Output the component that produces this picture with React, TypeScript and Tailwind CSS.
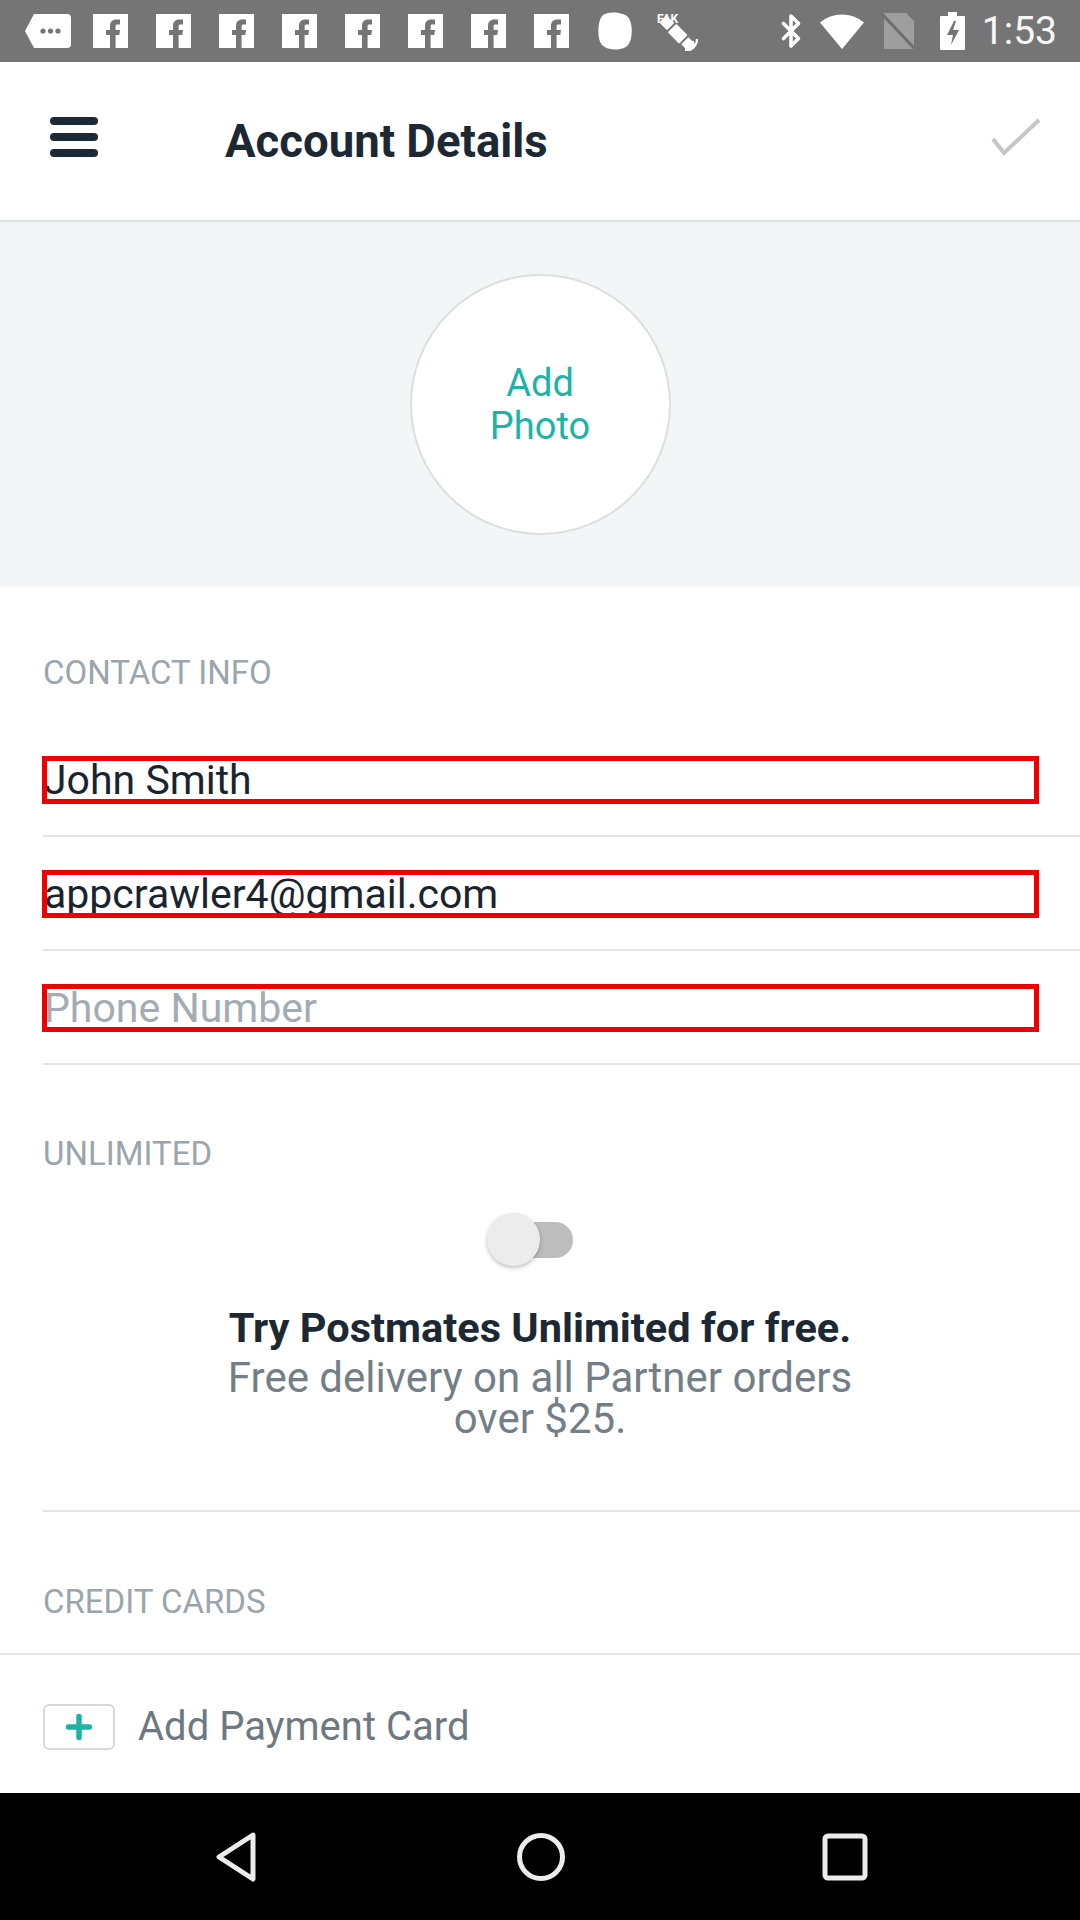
import React from 'react';
import { Bluetooth } from 'lucide-react';

function FbIcon() {
  return (
    <svg width="35" height="34" viewBox="0 0 35 34">
      <rect width="35" height="34" fill="#fff" />
      <path d="M17 34V21h-4v-5h4v-4c0-4.2 2.4-6.5 6.2-6.5H27v5h-2.6c-1.3 0-1.8.6-1.8 1.7V16H27l-.7 5h-3.7v13z" fill="#757575" />
    </svg>
  );
}

function StatusBar() {
  return (
    <div className="h-[62px] bg-[#757575] flex items-center pl-[25px] pr-[23px] shrink-0">
      {/* more notifications tag */}
      <svg width="46" height="34" viewBox="0 0 46 34">
        <path d="M9 0h33a4 4 0 0 1 4 4v26a4 4 0 0 1-4 4H9L0 17z" fill="#fff" />
        <circle cx="18" cy="17" r="2.6" fill="#757575" />
        <circle cx="25.5" cy="17" r="2.6" fill="#757575" />
        <circle cx="33" cy="17" r="2.6" fill="#757575" />
      </svg>
      <div className="flex gap-[28px] ml-[22px]">
        {Array.from({ length: 8 }).map((_, i) => (
          <FbIcon key={i} />
        ))}
      </div>
      {/* blob app icon */}
      <svg width="36" height="38" viewBox="0 0 36 38" className="ml-[28px]">
        <path d="M6 3c6-4 20-3 25 2 5 6 5 22 0 28-5 6-20 6-26 0C0 28 0 8 6 3z" fill="#fff" />
      </svg>
      {/* fake gps */}
      <svg width="46" height="40" viewBox="0 0 46 40" className="ml-[22px]">
        <text x="2" y="12" fontSize="12" fontWeight="700" fill="#fff" fontFamily="Roboto, sans-serif">FAK</text>
        <g transform="rotate(-45 22 22)">
          <rect x="16" y="15" width="12" height="16" rx="1" fill="#fff" />
          <rect x="17" y="2" width="10" height="11" fill="#fff" />
          <rect x="17" y="33" width="10" height="11" fill="#fff" />
        </g>
        <path d="M30 38a8 8 0 0 0 8-8M30 34a4 4 0 0 0 4-4M30 40a12 12 0 0 0 12-12" stroke="#fff" strokeWidth="2.2" fill="none" />
      </svg>
      <div className="flex-1" />
      <Bluetooth size={36} color="#fff" strokeWidth={2.4} className="mr-[8px]" />
      {/* wifi */}
      <svg width="46" height="36" viewBox="0 0 46 36" className="ml-[2px]">
        <path d="M1 9.5A34 34 0 0 1 45 9.5L23 36z" fill="#fff" />
      </svg>
      {/* no sim */}
      <svg width="34" height="36" viewBox="0 0 34 36" className="ml-[17px]">
        <path d="M2 0h22l8 8v28H2z" fill="#9e9e9e" />
        <path d="M1 2l31 33" stroke="#6e6e6e" strokeWidth="3" />
      </svg>
      {/* battery charging */}
      <svg width="25" height="38" viewBox="0 0 25 38" className="ml-[24px]">
        <rect x="8" y="0" width="9" height="4" fill="#fff" />
        <rect x="0" y="4" width="25" height="34" rx="1" fill="#fff" />
        <path d="M14 9l-7 14h6l-2 10 8-15h-6l3-9z" fill="#757575" />
      </svg>
      <span className="ml-[17px] text-[39px] leading-none text-[#f7f7f7] font-['Roboto']">1:53</span>
    </div>
  );
}

function Field({ value, placeholder }: { value?: string; placeholder?: string }) {
  return (
    <div className="pl-[42px]">
      <div className="h-[48px] mr-[41px] border-[5px] border-[#ee0000] flex items-center overflow-hidden">
        <span className={`text-[41px] leading-none -ml-[3px] ${value ? 'text-[#1a242e]' : 'text-[#a3acb2]'}`}>
          {value ?? placeholder}
        </span>
      </div>
      <div className="mt-[31px] ml-[1px] h-[2px] bg-[#e2e5e7]" />
    </div>
  );
}

function SectionLabel({ children }: { children: React.ReactNode }) {
  return (
    <div className="pl-[43px] h-[40px] flex items-center text-[33px] text-[#9ba5ac] leading-none">
      {children}
    </div>
  );
}

export default function App() {
  return (
    <div className="w-[1080px] h-[1920px] flex flex-col bg-white font-['Roboto',sans-serif] overflow-hidden">
      <StatusBar />

      {/* App bar */}
      <header className="h-[160px] shrink-0 border-b-2 border-[#dfe3e5] flex items-center relative">
        <div className="ml-[50px] w-[48px] flex flex-col gap-[8px] -mt-[8px]">
          <div className="h-[8px] rounded-full bg-[#1c2a38]" />
          <div className="h-[8px] rounded-full bg-[#1c2a38]" />
          <div className="h-[8px] rounded-full bg-[#1c2a38]" />
        </div>
        <h1 className="ml-[127px] mt-[2px] text-[45.5px] font-bold text-[#1c2833] leading-none">Account Details</h1>
        <div className="flex-1" />
        <svg width="50" height="38" viewBox="0 0 50 38" className="mr-[39px] -mt-[8px]">
          <path d="M2 21l11 14L48 2" stroke="#c6c6c6" strokeWidth="4" fill="none" />
        </svg>
      </header>

      {/* Photo */}
      <section className="h-[365px] shrink-0 bg-[#f3f6f7] flex items-center justify-center">
        <div className="w-[261px] h-[261px] rounded-full bg-white border-2 border-[#dcdfe0] flex flex-col items-center justify-center text-[38px] leading-[43px] text-[#1db3a7]">
          <span>Add</span>
          <span>Photo</span>
        </div>
      </section>

      <main className="flex-1 flex flex-col">
        <div className="mt-[65px]">
          <SectionLabel>CONTACT INFO</SectionLabel>
        </div>
        <div className="mt-[64px] flex flex-col gap-[33px]">
          <Field value="John Smith" />
          <Field value="appcrawler4@gmail.com" />
          <Field placeholder="Phone Number" />
        </div>

        <div className="mt-[68px]">
          <SectionLabel>UNLIMITED</SectionLabel>
        </div>

        <div className="mt-[40px] ml-[487px] relative w-[86px] h-[53px]">
          <div className="absolute left-[14px] top-[9px] w-[72px] h-[36px] rounded-full bg-[#bdbdbd]" />
          <div className="absolute left-0 top-0 w-[53px] h-[53px] rounded-full bg-[#ececec] shadow-[0_2px_4px_rgba(0,0,0,0.25)]" />
        </div>

        <div className="mt-[40px] text-center">
          <p className="text-[41.5px] leading-[44px] font-bold text-[#1c2833]">Try Postmates Unlimited for free.</p>
          <p className="mt-[7px] text-[42px] leading-[41px] text-[#737e86] mx-auto w-[660px]">
            Free delivery on all Partner orders over $25.
          </p>
        </div>

        <div className="mt-[71px] ml-[43px] h-[2px] bg-[#e2e5e7]" />

        <div className="mt-[69px]">
          <SectionLabel>CREDIT CARDS</SectionLabel>
        </div>
        <div className="mt-[32px] h-[2px] bg-[#e2e5e7]" />

        <div className="mt-[49px] pl-[43px] flex items-center">
          <div className="w-[72px] h-[46px] rounded-[6px] border-2 border-[#d6d9db] flex items-center justify-center">
            <svg width="28" height="28" viewBox="0 0 28 28">
              <path d="M14 3.5v21M3.5 14h21" stroke="#1db3a7" strokeWidth="5.5" strokeLinecap="round" />
            </svg>
          </div>
          <span className="ml-[23px] text-[40px] leading-none text-[#6e7880]">Add Payment Card</span>
        </div>
      </main>

      {/* Nav bar */}
      <nav className="h-[127px] shrink-0 bg-black flex items-center">
        <svg width="46" height="52" viewBox="0 0 46 52" className="ml-[214px]">
          <path d="M39 4L5 26l34 22z" stroke="#ececec" strokeWidth="5" strokeLinejoin="round" fill="none" />
        </svg>
        <svg width="52" height="52" viewBox="0 0 52 52" className="ml-[255px]">
          <circle cx="26" cy="26" r="21.5" stroke="#ececec" strokeWidth="5" fill="none" />
        </svg>
        <svg width="46" height="48" viewBox="0 0 46 48" className="ml-[255px]">
          <rect x="3" y="3" width="40" height="42" rx="3" stroke="#ececec" strokeWidth="5" fill="none" />
        </svg>
      </nav>
    </div>
  );
}
